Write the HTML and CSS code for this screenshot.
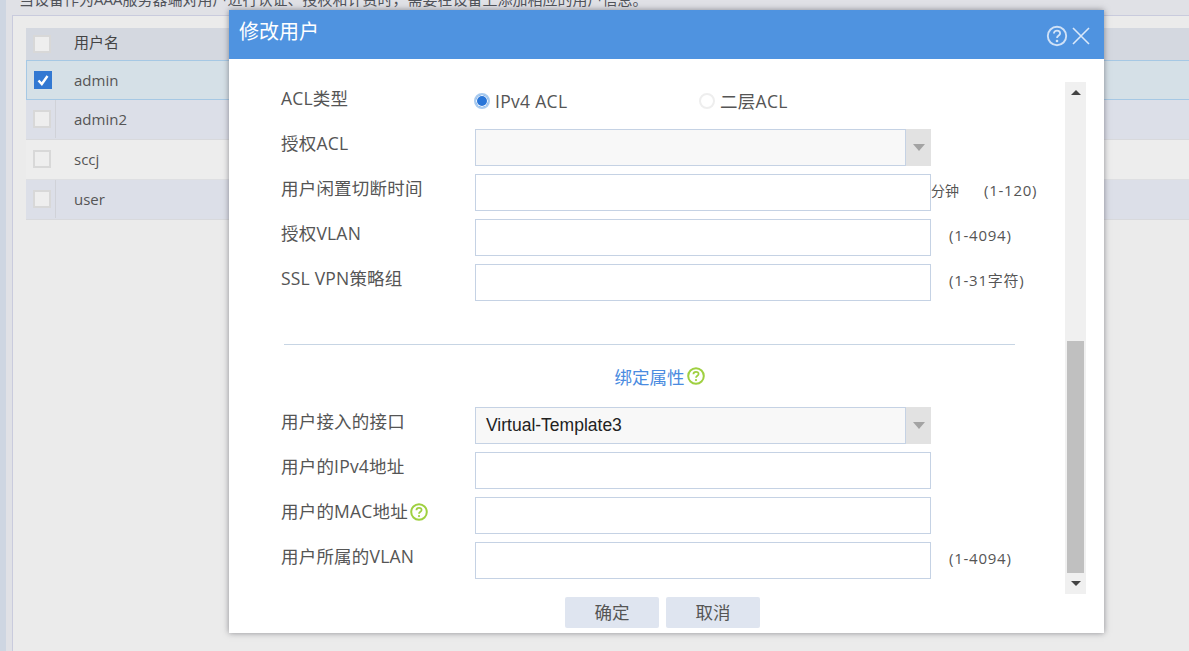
FILE: index.html
```html
<!DOCTYPE html>
<html lang="zh">
<head>
<meta charset="utf-8">
<title>修改用户</title>
<link rel="stylesheet" href="styles.css">
</head>
<body>
<div class="page">
  <div class="rail"></div>
  <main class="main">
    <div class="notice"><p class="notice-text">当设备作为AAA服务器端对用户进行认证、授权和计费时，需要在设备上添加相应的用户信息。</p></div>
    <section class="panel">
      <div class="row row-head"><div class="cell-check"><span class="box"></span></div><div class="cell-name">用户名</div></div>
      <div class="row row-selected"><div class="cell-check"><span class="box box-on"><svg viewBox="0 0 18 18" width="18" height="18"><path d="M4.5 9.5 L7.8 13 L13.5 5" fill="none" stroke="#fff" stroke-width="2.4"/></svg></span></div><div class="cell-name">admin</div></div>
      <div class="row row-alt"><div class="cell-check"><span class="box"></span></div><div class="cell-name">admin2</div></div>
      <div class="row row-plain"><div class="cell-check"><span class="box"></span></div><div class="cell-name">sccj</div></div>
      <div class="row row-alt"><div class="cell-check"><span class="box"></span></div><div class="cell-name">user</div></div>
    </section>
  </main>
</div>

<div class="modal">
  <header class="modal-head">
    <h1 class="modal-title">修改用户</h1>
    <div class="modal-tools">
      <svg class="tool" viewBox="0 0 22 22" width="22" height="22"><circle cx="11" cy="11" r="9.2" fill="none" stroke="#cfe1f7" stroke-width="1.9"/><path d="M7.9 8.6 C7.9 6.7 9.3 5.7 11 5.7 C12.8 5.7 14.1 6.8 14.1 8.4 C14.1 10.4 11 10.6 11 13" fill="none" stroke="#d3e4f8" stroke-width="1.8"/><circle cx="11" cy="16" r="1.3" fill="#d3e4f8"/></svg>
      <svg class="tool" viewBox="0 0 18 18" width="18" height="18"><path d="M1 1 L17 17 M17 1 L1 17" fill="none" stroke="#dbe9fa" stroke-width="1.6"/></svg>
    </div>
  </header>
  <div class="modal-body">
    <form class="form">
      <div class="field">
        <label class="label">ACL类型</label>
        <div class="radios">
          <span class="radio-item radio-first"><span class="radio radio-on"></span>IPv4 ACL</span>
          <span class="radio-item"><span class="radio"></span>二层ACL</span>
        </div>
      </div>
      <div class="field">
        <label class="label">授权ACL</label>
        <div class="select"><span class="select-value"></span><span class="select-arrow"></span></div>
      </div>
      <div class="field">
        <label class="label">用户闲置切断时间</label>
        <div class="input"></div>
        <span class="unit">分钟</span><span class="hint hint-unit">(1-120)</span>
      </div>
      <div class="field">
        <label class="label">授权VLAN</label>
        <div class="input"></div>
        <span class="hint">(1-4094)</span>
      </div>
      <div class="field">
        <label class="label">SSL VPN策略组</label>
        <div class="input"></div>
        <span class="hint">(1-31字符)</span>
      </div>
      <hr class="divider">
      <div class="section-title">绑定属性<svg class="help" viewBox="0 0 18 18" width="18" height="18"><circle cx="9" cy="9" r="7.8" fill="none" stroke="#9fd040" stroke-width="2"/><path d="M6.4 7.2 C6.4 5.6 7.6 4.8 9 4.8 C10.5 4.8 11.6 5.7 11.6 7 C11.6 8.7 9 8.8 9 10.8" fill="none" stroke="#9fd040" stroke-width="1.7"/><circle cx="9" cy="13.1" r="1.1" fill="#9fd040"/></svg></div>
      <div class="field">
        <label class="label">用户接入的接口</label>
        <div class="select"><span class="select-value">Virtual-Template3</span><span class="select-arrow"></span></div>
      </div>
      <div class="field">
        <label class="label">用户的IPv4地址</label>
        <div class="input"></div>
      </div>
      <div class="field">
        <label class="label">用户的MAC地址<svg class="help" viewBox="0 0 18 18" width="18" height="18"><circle cx="9" cy="9" r="7.8" fill="none" stroke="#9fd040" stroke-width="2"/><path d="M6.4 7.2 C6.4 5.6 7.6 4.8 9 4.8 C10.5 4.8 11.6 5.7 11.6 7 C11.6 8.7 9 8.8 9 10.8" fill="none" stroke="#9fd040" stroke-width="1.7"/><circle cx="9" cy="13.1" r="1.1" fill="#9fd040"/></svg></label>
        <div class="input"></div>
      </div>
      <div class="field">
        <label class="label">用户所属的VLAN</label>
        <div class="input"></div>
        <span class="hint">(1-4094)</span>
      </div>
    </form>
    <div class="scrollbar">
      <span class="scroll-btn"><span class="tri-up"></span></span>
      <span class="scroll-space"></span>
      <span class="scroll-thumb"></span>
      <span class="scroll-btn scroll-btn-down"><span class="tri-down"></span></span>
    </div>
  </div>
  <footer class="modal-foot">
    <button class="btn" type="button">确定</button>
    <button class="btn" type="button">取消</button>
  </footer>
</div>
</body>
</html>
```
FILE: styles.css
```css
* { box-sizing: border-box; }
html, body { margin: 0; height: 100%; overflow: hidden; }
body {
  font-family: "Open Sans", "Noto Sans CJK SC", sans-serif;
  color: #555;
  background: #ebebeb;
}
.page { display: flex; height: 651px; }
.rail { width: 6px; background: #ced6e2; }
.main { flex: 1; display: flex; flex-direction: column; padding-left: 6px; background: #e0e1e6; min-width: 0; }
.notice { height: 15px; overflow: hidden; }
.notice-text { margin: -11px 0 0 7px; font-size: 15px; line-height: 20px; color: #50535a; white-space: nowrap; }
.panel {
  flex: 1;
  background: #ebebeb;
  border-left: 1px solid #c9cbdd;
  border-top: 1px solid #c9cbdd;
  padding: 12px 0 0 13px;
}
.row { display: flex; align-items: center; height: 40px; font-size: 15px; color: #555; }
.row-head { height: 32px; background: #d4d8e0; color: #444; }
.row-head .cell-name { margin-bottom: 5px; }
.row-selected { background: #d5e0e7; border: 1px solid #a6c8e4; border-right: 0; }
.row-selected .cell-check { width: 29px; }
.row-alt { background: #dcdfe8; border-bottom: 1px solid #d8d9dc; padding-bottom: 1px; }
.row-plain { background: #ededed; border-bottom: 1px solid #dedfe2; padding-bottom: 1px; }
.cell-check { width: 30px; height: 100%; display: flex; align-items: center; padding-left: 7px; flex: none; }
.row-alt .cell-check { border-right: 1px solid #d0d2d8; }
.cell-name { padding-left: 18px; }
.box { display: block; width: 18px; height: 18px; background: #eee; border: 2px solid #d8d8d8; }
.box-on { background: #3278d2; border: 0; }
.box-on svg { display: block; }

.modal {
  position: absolute;
  left: 229px;
  top: 10px;
  width: 875px;
  height: 623px;
  background: #fff;
  display: flex;
  flex-direction: column;
  box-shadow: 0 0 6px rgba(60, 60, 70, .55);
}
.modal-head {
  height: 49px;
  background: #4f93e0;
  display: flex;
  align-items: center;
  justify-content: space-between;
  padding: 0 14px 0 10px;
  flex: none;
}
.modal-title { margin: 0 0 6px; font-size: 20px; line-height: 28px; font-weight: 400; color: #fff; }
.modal-tools { display: flex; align-items: center; gap: 4px; padding-top: 3px; }
.tool { display: block; }
.modal-body { display: flex; padding: 23px 18px 0 52px; height: 535px; flex: none; }
.form { flex: 1; padding-top: 2px; margin: 0; min-width: 0; }
.field { display: flex; align-items: flex-start; height: 37px; margin-bottom: 8px; white-space: nowrap; }
.label { width: 194px; flex: none; font-size: 17.5px; letter-spacing: .2px; line-height: 29px; color: #555; display: flex; align-items: center; }
.label .help { margin-left: 2px; }
.radios { display: flex; align-items: center; height: 33px; font-size: 17.5px; letter-spacing: .3px; margin-left: -1px; }
.radio-item { display: flex; align-items: center; color: #555; }
.radio-first { width: 225px; }
.radio { width: 16px; height: 16px; border-radius: 50%; border: 2px solid #eee; background: #fff; margin-right: 5px; }
.radio-on { border-color: #a9cbef; background: #2a76d8; box-shadow: inset 0 0 0 1px #fff; }
.input { width: 456px; height: 37px; border: 1px solid #c5d2e4; background: #fff; flex: none; }
.select { width: 456px; height: 37px; display: flex; flex: none; }
.select-value {
  flex: 1;
  border: 1px solid #c5d2e4;
  background: #f8f8f8;
  font-family: "Liberation Sans", sans-serif;
  font-size: 17.5px;
  line-height: 35px;
  padding-left: 10px;
  color: #222;
}
.select-arrow { width: 25px; background: #e2e2e2; display: flex; align-items: center; justify-content: center; }
.select-arrow::after { content: ""; border: 6px solid transparent; border-top: 7px solid #a3a3a3; border-bottom: 0; }
.unit { font-size: 14px; line-height: 33px; color: #555; }
.hint { font-size: 15px; line-height: 33px; margin-left: 18px; color: #555; letter-spacing: .75px; }
.hint-unit { margin-left: 25px; }
.divider { border: 0; border-top: 1px solid #c7d5e4; width: 731px; margin: 43px 0 0 3px; }
.section-title {
  height: 62px;
  display: flex;
  align-items: center;
  justify-content: center;
  width: 731px;
  margin-left: 3px;
  padding-left: 20px;
  font-size: 17.5px;
  color: #4a8be0;
}
.section-title .help { margin-left: 2px; }
.scrollbar { width: 21px; height: 512px; background: #f0f0f0; display: flex; flex-direction: column; align-items: center; flex: none; }
.scroll-btn { height: 21px; width: 100%; display: flex; align-items: center; justify-content: center; flex: none; }
.scroll-space { flex: 1; }
.scroll-thumb { width: 17px; height: 232px; background: #c0c0c0; flex: none; }
.tri-up { border: 5px solid transparent; border-bottom: 5px solid #444; border-top: 0; }
.tri-down { border: 5px solid transparent; border-top: 5px solid #444; border-bottom: 0; }
.modal-foot { display: flex; gap: 7px; padding: 3px 0 0 336px; }
.btn {
  width: 94px;
  height: 31px;
  border: 0;
  border-radius: 2px;
  background: #dfe5f0;
  color: #555;
  font: 17.5px "Open Sans", "Noto Sans CJK SC", sans-serif;
  line-height: 31px;
  padding: 0;
}
```
